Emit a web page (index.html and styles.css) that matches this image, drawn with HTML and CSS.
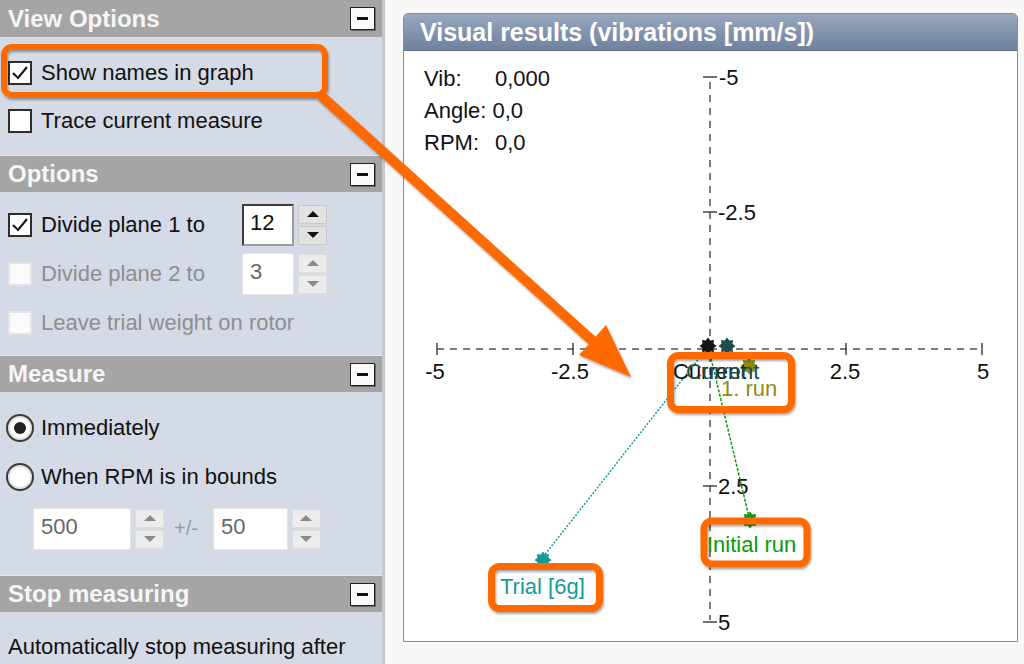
FILE: index.html
```html
<!DOCTYPE html>
<html lang="en">
  <head>
    <meta charset="UTF-8" />
    <title>Balancing - visual results</title>
    <link rel="stylesheet" href="styles.css">
  </head>
  <body>
    <aside class="sidebar">
      <section class="group">
        <div class="groupHead"><span>View Options</span><i class="collapse"></i></div>
        <div class="groupBody view">
          <div class="row">
            <span class="check on"><svg width="20" height="20" viewBox="0 0 20 20"><polyline points="3,10 8,15 17,4" fill="none" stroke="#111" stroke-width="2"/></svg></span>
            <span>Show names in graph</span>
          </div>
          <div class="row">
            <span class="check"></span>
            <span>Trace current measure</span>
          </div>
        </div>
      </section>

      <section class="group">
        <div class="groupHead"><span>Options</span><i class="collapse"></i></div>
        <div class="groupBody opts">
          <div class="row">
            <span class="check on"><svg width="20" height="20" viewBox="0 0 20 20"><polyline points="3,10 8,15 17,4" fill="none" stroke="#111" stroke-width="2"/></svg></span>
            <span class="optLabel">Divide plane 1 to</span>
            <span class="field">12</span>
            <span class="spin"><b class="up"></b><b class="down"></b></span>
          </div>
          <div class="row off">
            <span class="check"></span>
            <span class="optLabel">Divide plane 2 to</span>
            <span class="field">3</span>
            <span class="spin"><b class="up"></b><b class="down"></b></span>
          </div>
          <div class="row off">
            <span class="check"></span>
            <span>Leave trial weight on rotor</span>
          </div>
        </div>
      </section>

      <section class="group">
        <div class="groupHead"><span>Measure</span><i class="collapse"></i></div>
        <div class="groupBody measure">
          <div class="row radioRow">
            <span class="radio on"></span>
            <span>Immediately</span>
          </div>
          <div class="row radioRow">
            <span class="radio"></span>
            <span>When RPM is in bounds</span>
          </div>
          <div class="bounds off">
            <span class="field wide">500</span>
            <span class="spin"><b class="up"></b><b class="down"></b></span>
            <span class="plusMinus">+/-</span>
            <span class="field mid">50</span>
            <span class="spin"><b class="up"></b><b class="down"></b></span>
          </div>
        </div>
      </section>

      <section class="group">
        <div class="groupHead"><span>Stop measuring</span><i class="collapse"></i></div>
        <div class="groupBody stop">
          <div class="row">Automatically stop measuring after</div>
        </div>
      </section>
    </aside>

    <main class="workspace">
      <div class="results">
        <div class="resultsHead">Visual results (vibrations [mm/s])</div>
        <div class="resultsBody">
          <svg class="plot" width="613" height="590" viewBox="404 51 613 590">
            <defs>
              <polygon id="gear" points="8.5,0 5.5,2.3 6,6 2.3,5.5 0,8.5 -2.3,5.5 -6,6 -5.5,2.3 -8.5,0 -5.5,-2.3 -6,-6 -2.3,-5.5 0,-8.5 2.3,-5.5 6,-6 5.5,-2.3"/>
            </defs>

            <g class="plotText">
              <text x="424" y="86">Vib:</text>
              <text x="495" y="86">0,000</text>
              <text x="424" y="118">Angle: 0,0</text>
              <text x="424" y="150">RPM:</text>
              <text x="495" y="150">0,0</text>
            </g>

            <!-- axes -->
            <g stroke="#7c7c7c" stroke-width="2" stroke-dasharray="7 6">
              <line x1="437" y1="349" x2="982" y2="349"/>
              <line x1="710" y1="82" x2="710" y2="620"/>
            </g>
            <g stroke="#444" stroke-width="1.5">
              <line x1="437" y1="343" x2="437" y2="355"/>
              <line x1="573" y1="343" x2="573" y2="355"/>
              <line x1="846" y1="343" x2="846" y2="355"/>
              <line x1="982" y1="343" x2="982" y2="355"/>
              <line x1="703" y1="77" x2="717" y2="77"/>
              <line x1="703" y1="212" x2="717" y2="212"/>
              <line x1="703" y1="486" x2="717" y2="486"/>
              <line x1="703" y1="622" x2="717" y2="622"/>
            </g>
            <g class="plotText">
              <text x="435" y="379" text-anchor="middle">-5</text>
              <text x="570" y="379" text-anchor="middle">-2.5</text>
              <text x="845" y="379" text-anchor="middle">2.5</text>
              <text x="983" y="379" text-anchor="middle">5</text>
              <text x="719" y="85">-5</text>
              <text x="718" y="220">-2.5</text>
              <text x="718" y="494">2.5</text>
              <text x="718" y="630">5</text>
            </g>

            <!-- measurement vectors -->
            <line x1="543" y1="557" x2="704" y2="352" stroke="#139a9a" stroke-width="1.5" stroke-dasharray="2 1.5"/>
            <line x1="709" y1="350" x2="749" y2="517" stroke="#0c9a0c" stroke-width="1.5" stroke-dasharray="3 1.5"/>

            <use href="#gear" x="708" y="346" fill="#151515"/>
            <use href="#gear" x="727" y="346" fill="#1d4c4c"/>
            <use href="#gear" x="749" y="366" fill="#8c8c12"/>
            <use href="#gear" x="543" y="560" fill="#139a9a"/>
            <use href="#gear" x="750" y="520" fill="#0c9a0c"/>

            <g class="plotText">
              <text x="673" y="379" fill="#111">Current</text>
              <text x="686" y="379" fill="#1d4c4c">Current</text>
              <text x="721" y="396" fill="#8c8c12">1. run</text>
              <text x="707" y="552" fill="#0c9a0c">Initial run</text>
              <text x="500" y="594" fill="#139a9a">Trial [6g]</text>
            </g>
          </svg>
        </div>
      </div>
    </main>

    <svg class="callouts" width="1024" height="664" viewBox="0 0 1024 664">
      <defs>
        <filter id="shade" x="-20%" y="-20%" width="140%" height="140%">
          <feDropShadow dx="1" dy="2" stdDeviation="1.2" flood-color="#000" flood-opacity="0.35"/>
        </filter>
      </defs>
      <g fill="none" stroke="#ff6a00" filter="url(#shade)">
        <rect x="4" y="47" width="321" height="48" rx="8" stroke-width="6"/>
        <line x1="318" y1="93" x2="596" y2="344" stroke-width="10"/>
        <rect x="670.5" y="355.5" width="121" height="54" rx="8" stroke-width="7"/>
        <rect x="704" y="521" width="103" height="43" rx="8" stroke-width="7"/>
        <rect x="491.5" y="566.5" width="108" height="42" rx="8" stroke-width="7"/>
      </g>
      <polygon points="606,325 579,355 631,377" fill="#ff6a00" filter="url(#shade)"/>
    </svg>
  </body>
</html>
```

FILE: styles.css
```css
* {
  margin: 0;
  padding: 0;
  box-sizing: border-box;
}
body {
  width: 1024px;
  height: 664px;
  overflow: hidden;
  display: flex;
  position: relative;
  background: #f8f8f8;
  font-family: "Liberation Sans", Arial, sans-serif;
  font-size: 22px;
  color: #111;
}

/* left option panel */
.sidebar {
  width: 385px;
  flex-shrink: 0;
  background: #d4dae6;
  border-right: 3px solid #c3c7cf;
  display: flex;
  flex-direction: column;
}
.groupHead {
  height: 37px;
  background: #a5a5a5;
  color: #f6f6f6;
  font-weight: bold;
  font-size: 24px;
  display: flex;
  align-items: center;
  justify-content: space-between;
  padding: 0 7px 0 8px;
}
.group + .group .groupHead {
  border-top: 1px solid #e6e9ef;
}
.collapse {
  width: 25px;
  height: 23px;
  background: #fafafa;
  border: 1px solid #222;
  box-shadow: 1px 1px 0 #666;
  display: flex;
  align-items: center;
  justify-content: center;
}
.collapse::before {
  content: "";
  width: 11px;
  height: 3px;
  background: #111;
}
.groupBody.view {
  padding: 12px 0 10px;
}
.groupBody.opts {
  padding: 8px 0;
}
.groupBody.opts .row {
  height: 49px;
}
.groupBody.measure {
  padding: 12px 0 26px;
}
.groupBody.measure .row {
  height: 48.5px;
}
.groupBody.stop {
  padding: 11px 0 0;
}
.row {
  height: 48px;
  display: flex;
  align-items: center;
  gap: 9px;
  padding-left: 8px;
}
.row.off {
  color: #8e8e8e;
}
.check {
  width: 24px;
  height: 24px;
  background: #fff;
  border: 2px solid #2e2e2e;
  display: flex;
  align-items: center;
  justify-content: center;
}
.row.off .check {
  background: #fbfbfb;
  border-color: #e2e4e8;
}
.radioRow {
  padding-left: 6px;
  gap: 7px;
}
.radio {
  width: 28px;
  height: 28px;
  border-radius: 50%;
  background: #fff;
  border: 2px solid #3a3a3a;
  box-shadow: inset 0 0 0 2px #e2e2e2;
  display: flex;
  align-items: center;
  justify-content: center;
}
.radio.on::before {
  content: "";
  width: 12px;
  height: 12px;
  border-radius: 50%;
  background: #222;
}
.optLabel {
  width: 192px;
}

/* numeric boxes with spin buttons */
.field {
  width: 52px;
  height: 42px;
  background: #fff;
  border: 2px solid;
  border-color: #3c3c3c #9c9c9c #9c9c9c #3c3c3c;
  padding: 0 0 3px 6px;
  display: flex;
  align-items: center;
}
.off .field {
  border: 1px solid #e4e4e4;
  color: #666;
  padding-left: 7px;
}
.field.wide {
  width: 98px;
}
.field.mid {
  width: 75px;
}
.spin {
  display: flex;
  flex-direction: column;
  gap: 2px;
  margin-left: 4px;
}
.row .spin {
  margin-left: -5px;
}
.spin b {
  width: 29px;
  height: 19px;
  background: #e2e2e2;
  border: 1px solid #c8c8c8;
  display: flex;
  align-items: center;
  justify-content: center;
}
.spin .up::before,
.spin .down::before {
  content: "";
  border-left: 6px solid transparent;
  border-right: 6px solid transparent;
}
.spin .up::before {
  border-bottom: 6px solid #111;
}
.spin .down::before {
  border-top: 6px solid #111;
}
.off .spin b {
  background: #ececec;
  border-color: #dedede;
}
.off .spin .up::before {
  border-bottom-color: #8a8a8a;
}
.off .spin .down::before {
  border-top-color: #8a8a8a;
}
.bounds {
  height: 41px;
  margin-top: 7px;
  padding-left: 33px;
  display: flex;
  align-items: center;
}
.plusMinus {
  color: #9a9a9a;
  font-size: 20px;
  margin: 0 15px 0 10px;
}

/* graph window */
.workspace {
  flex: 1;
  padding: 13px 6px 22px 18px;
}
.results {
  width: 615px;
  height: 629px;
  border: 1px solid #8c8c8c;
  border-radius: 5px 5px 0 0;
  display: flex;
  flex-direction: column;
  overflow: hidden;
}
.resultsHead {
  height: 37px;
  background: linear-gradient(#98a7be, #6f819d);
  border-bottom: 1px solid #5e6f89;
  color: #fff;
  font-weight: bold;
  font-size: 25px;
  padding-left: 16px;
  display: flex;
  align-items: center;
}
.resultsBody {
  flex: 1;
  background: #fff;
}
.plot {
  display: block;
}
.plotText {
  font-family: "Liberation Sans", Arial, sans-serif;
  font-size: 22px;
  fill: #111;
}

/* orange annotations on top of the screenshot */
.callouts {
  position: absolute;
  left: 0;
  top: 0;
  pointer-events: none;
}
```
